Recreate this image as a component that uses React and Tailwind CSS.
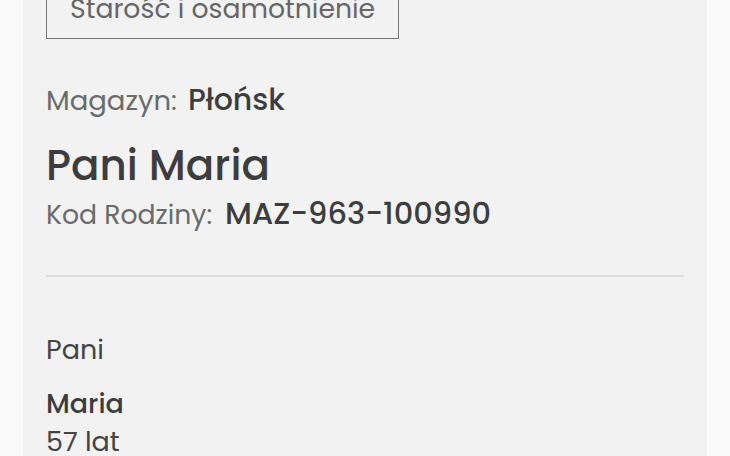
import React from 'react';

const font = { fontFamily: '"Poppins", "Inter", "Noto Sans", sans-serif' };

export default function App() {
    return (
        <div className="min-h-screen bg-[#fafafa] overflow-hidden" style={font}>
            <div className="ml-[23px] w-[684px] bg-[#f2f2f2] px-[23px] pb-10 -mt-[14px]">
                <div className="inline-block border border-[#777] px-[23px] pt-[1px] pb-[8px] text-[26.7px] leading-[42px] text-[#666]">
                    Starość i osamotnienie
                </div>

                <div className="mt-[43px] flex items-baseline gap-[11px] leading-[36px]">
                    <span className="text-[27.5px] text-[#6b6b6b]">Magazyn:</span>
                    <span className="text-[30px] font-medium text-[#3d3d3d]">Płońsk</span>
                </div>

                <h1 className="mt-[21px] text-[42px] font-medium leading-[52px] text-[#3d3d3d]">Pani Maria</h1>

                <div className="mt-[4px] flex items-baseline gap-[13px] leading-[36px]">
                    <span className="text-[26.7px] text-[#6b6b6b]">Kod Rodziny:</span>
                    <span className="text-[30.5px] font-medium text-[#3d3d3d]">MAZ-963-100990</span>
                </div>

                <div className="mt-[42px] h-[2px] bg-[#dedede]"></div>

                <div className="mt-[55px] text-[27px] leading-[36px] text-[#444]">Pani</div>
                <div className="mt-[18px] text-[27px] font-medium leading-[36px] text-[#3d3d3d]">Maria</div>
                <div className="mt-[2px] text-[27px] leading-[36px] text-[#444]">57 lat</div>
            </div>
        </div>
    );
}
